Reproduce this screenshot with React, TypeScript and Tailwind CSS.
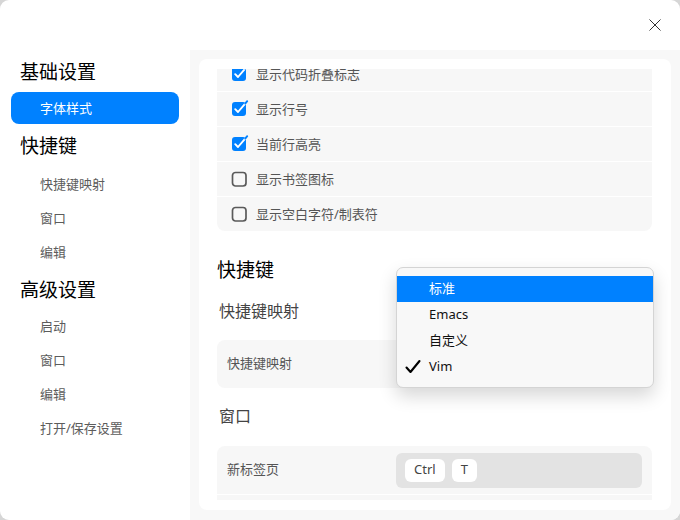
import React from "react"

const rows = [
  { label: "显示代码折叠标志", checked: true },
  { label: "显示行号", checked: true },
  { label: "当前行高亮", checked: true },
  { label: "显示书签图标", checked: false },
  { label: "显示空白字符/制表符", checked: false },
]

function CheckBox({ checked }: { checked: boolean }) {
  if (checked) {
    return (
      <svg width="14" height="14" viewBox="0 0 14 14" className="overflow-visible shrink-0">
        <rect x="0" y="0" width="14" height="14" rx="3" fill="#0081ff" />
        <path d="M3.2 7.2 L6 10 L13.2 1.6" fill="none" stroke="#fff" strokeWidth="1.9" strokeLinecap="round" strokeLinejoin="round" />
        <path d="M13.2 1.6 L15.2 -0.8" fill="none" stroke="#0081ff" strokeWidth="1.9" strokeLinecap="round" />
      </svg>
    )
  }
  return (
    <svg width="14" height="14" viewBox="0 0 14 14" className="overflow-visible shrink-0">
      <rect x="0.5" y="0.5" width="13.5" height="13.5" rx="3" fill="none" stroke="#5a5a5a" strokeWidth="1.7" />
    </svg>
  )
}

function NavHeading({ children, className = "" }: { children: React.ReactNode; className?: string }) {
  return <div className={`h-8 flex items-center pl-5 text-[19px] text-black ${className}`}>{children}</div>
}

function NavItem({ children, active = false }: { children: React.ReactNode; active?: boolean }) {
  if (active) {
    return (
      <div className="mx-[11px] mt-1 h-8 rounded-[8px] bg-[#0081ff] flex items-center pl-[29px] pt-px text-[13px] text-white">
        {children}
      </div>
    )
  }
  return <div className="h-[34px] flex items-center pl-10 pt-px text-[13px] text-[#5c5c5c]">{children}</div>
}

function Key({ children }: { children: React.ReactNode }) {
  return (
    <div className="h-[23px] px-[9px] rounded-[6px] bg-white flex items-center text-[13px] text-[#444]">{children}</div>
  )
}

export default function App() {
  return (
    <div className="w-[680px] h-[520px] bg-[#d6d6d6] font-['Noto_Sans','Noto_Sans_CJK_SC',sans-serif]">
      <div className="relative w-full h-full rounded-[9px] bg-white overflow-hidden flex flex-col">
        {/* title bar */}
        <div className="h-[50px] shrink-0 flex items-center justify-end pr-[19px]">
          <svg width="12" height="12" viewBox="0 0 12 12">
            <path d="M0.5 0.5 L11.5 11.5 M11.5 0.5 L0.5 11.5" stroke="#333" strokeWidth="1" />
          </svg>
        </div>

        <div className="flex flex-1 min-h-0">
          {/* sidebar */}
          <div className="w-[190px] shrink-0 pt-[6px]">
            <NavHeading>基础设置</NavHeading>
            <NavItem active>字体样式</NavItem>
            <NavHeading className="mt-[6px] mb-[5px]">快捷键</NavHeading>
            <NavItem>快捷键映射</NavItem>
            <NavItem>窗口</NavItem>
            <NavItem>编辑</NavItem>
            <NavHeading className="mt-[5px] mb-[3px]">高级设置</NavHeading>
            <NavItem>启动</NavItem>
            <NavItem>窗口</NavItem>
            <NavItem>编辑</NavItem>
            <NavItem>打开/保存设置</NavItem>
          </div>

          {/* content */}
          <div className="flex-1 bg-[#f8f8f8] pt-[9px] pb-[10px] px-[9px]">
            <div className="h-full rounded-[8px] bg-white pt-[10px] pb-[10px] pl-[18px] pr-[19px]">
              <div className="h-full overflow-hidden">
                <div className="-mt-[12px]">
                  <div className="flex flex-col gap-px rounded-[8px] overflow-hidden">
                    {rows.map((r) => (
                      <div key={r.label} className="h-[34px] bg-[#f7f7f7] flex items-center pl-[15px]">
                        <CheckBox checked={r.checked} />
                        <span className="ml-[10px] pt-[2px] text-[13px] text-[#555]">{r.label}</span>
                      </div>
                    ))}
                  </div>

                  <div className="mt-[27px] h-6 flex items-center text-[19px] text-black">快捷键</div>
                  <div className="mt-[18px] h-[22px] flex items-center pl-[2px] text-[16px] text-[#444]">快捷键映射</div>
                  <div className="mt-[18px] h-12 rounded-[8px] bg-[#f7f7f7] flex items-center pl-[10px] pr-[10px]">
                    <span className="w-[169px] text-[13px] text-[#555]">快捷键映射</span>
                    <div className="flex-1 h-9 rounded-[6px] bg-[#e3e3e3]" />
                  </div>

                  <div className="mt-[17px] h-[22px] flex items-center pl-[2px] text-[16px] text-[#444]">窗口</div>
                  <div className="mt-[19px] flex flex-col gap-px rounded-[8px] overflow-hidden">
                    <div className="h-12 bg-[#f7f7f7] flex items-center pl-[10px] pr-[10px]">
                      <span className="w-[169px] text-[13px] text-[#555]">新标签页</span>
                      <div className="flex-1 h-[35px] rounded-[6px] bg-[#e3e3e3] flex items-center gap-[7px] pl-[9px]">
                        <Key>Ctrl</Key>
                        <Key>T</Key>
                      </div>
                    </div>
                    <div className="h-12 bg-[#f7f7f7]" />
                  </div>
                </div>
              </div>
            </div>
          </div>
        </div>

        {/* dropdown popup */}
        <div className="absolute left-[396px] top-[267px] w-[258px] h-[121px] rounded-[7px] bg-[#f8f8f8] border border-[#d4d4d4] shadow-[0_8px_18px_rgba(0,0,0,0.16)] pt-[8px]">
          <div className="h-[26px] bg-[#0081ff] flex items-center pl-8 text-[13px] text-white">标准</div>
          <div className="h-[26px] flex items-center pl-8 text-[13px] text-[#111]">Emacs</div>
          <div className="h-[26px] flex items-center pl-8 text-[13px] text-[#111]">自定义</div>
          <div className="relative h-[26px] flex items-center pl-8 text-[13px] text-[#111]">
            <svg width="16" height="16" viewBox="0 0 16 16" className="absolute left-[8px] top-[5px]">
              <path d="M1.5 8.5 L5.5 13 L14.5 2" fill="none" stroke="#000" strokeWidth="2.1" strokeLinecap="round" strokeLinejoin="round" />
            </svg>
            Vim
          </div>
        </div>
      </div>
    </div>
  )
}
